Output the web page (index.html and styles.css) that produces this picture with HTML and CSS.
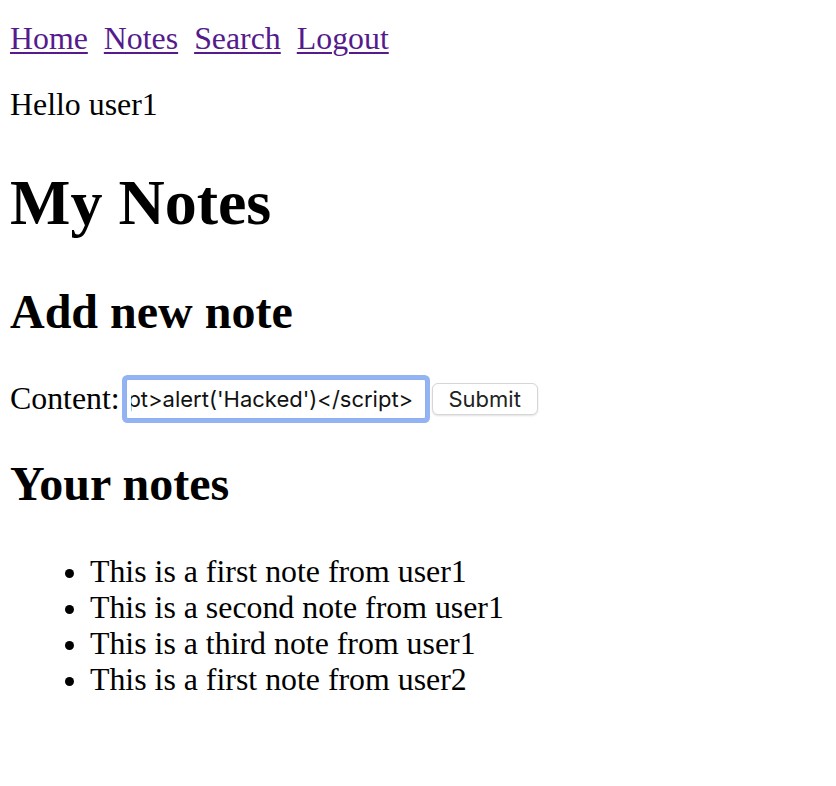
FILE: index.html
```html
<!DOCTYPE html>
<html lang="en">
<head>
<meta charset="utf-8">
<title>My Notes</title>
<link rel="stylesheet" href="styles.css">
</head>
<body>
<nav class="nav">
  <a href="#" class="nav-link">Home</a>
  <a href="#" class="nav-link">Notes</a>
  <a href="#" class="nav-link">Search</a>
  <a href="#" class="nav-link">Logout</a>
</nav>
<p class="hello">Hello user1</p>
<h1 class="title">My Notes</h1>
<h2 class="section add-title">Add new note</h2>
<form class="note-form" onsubmit="return false">
  <label class="label" for="content">Content:</label>
  <input class="field" id="content" type="text" value="<script>alert('Hacked')</script>">
  <button class="submit" type="submit">Submit</button>
</form>
<h2 class="section notes-title">Your notes</h2>
<ul class="notes">
  <li>This is a first note from user1</li>
  <li>This is a second note from user1</li>
  <li>This is a third note from user1</li>
  <li>This is a first note from user2</li>
</ul>
<script>
  var f = document.getElementById('content');
  f.scrollLeft = f.scrollWidth;
</script>
</body>
</html>
```

FILE: styles.css
```css
html, body {
  background: #fff;
}
body {
  margin: 0;
  padding: 21px 10px 0 10px;
  font-family: "Liberation Serif", "Times New Roman", serif;
  font-size: 31.85px;
  line-height: 36px;
  color: #000;
}
.nav {
  display: flex;
  gap: 16px;
  height: 36px;
}
.nav-link {
  color: #551a8b;
  text-decoration: underline;
  text-underline-offset: 3px;
  text-decoration-thickness: 2px;
}
.hello {
  margin: 30px 0 0 0;
}
.title {
  margin: 43px 0 0 0;
  font-size: 64px;
  line-height: 74px;
  font-weight: bold;
}
.section {
  font-size: 48px;
  line-height: 56px;
  font-weight: bold;
}
.add-title {
  margin: 44px 0 0 0;
}
.note-form {
  display: flex;
  align-items: center;
  margin-top: 39px;
  height: 40px;
}
.label {
  margin-right: 6px;
}
.field {
  box-sizing: border-box;
  width: 300px;
  height: 40px;
  margin: 0;
  padding: 0 12px 0 4px;
  border: 1px solid #8fb0ee;
  border-radius: 2px;
  box-shadow: 0 0 0 4px #94b3f2;
  outline: none;
  font-family: Inter, "Liberation Sans", Arial, sans-serif;
  font-size: 22px;
  color: #111;
  background: #fff;
}
.submit {
  box-sizing: border-box;
  margin-left: 6px;
  height: 32px;
  width: 106px;
  padding: 0;
  border: 1px solid #d6d6d6;
  border-radius: 6px;
  background: #fff;
  box-shadow: 0 1px 2px rgba(0,0,0,0.12);
  font-family: Inter, "Liberation Sans", Arial, sans-serif;
  font-size: 22px;
  color: #222;
}
.notes-title {
  margin: 37px 0 0 0;
}
.notes {
  margin: 42px 0 0 0;
  padding-left: 80px;
}
```
